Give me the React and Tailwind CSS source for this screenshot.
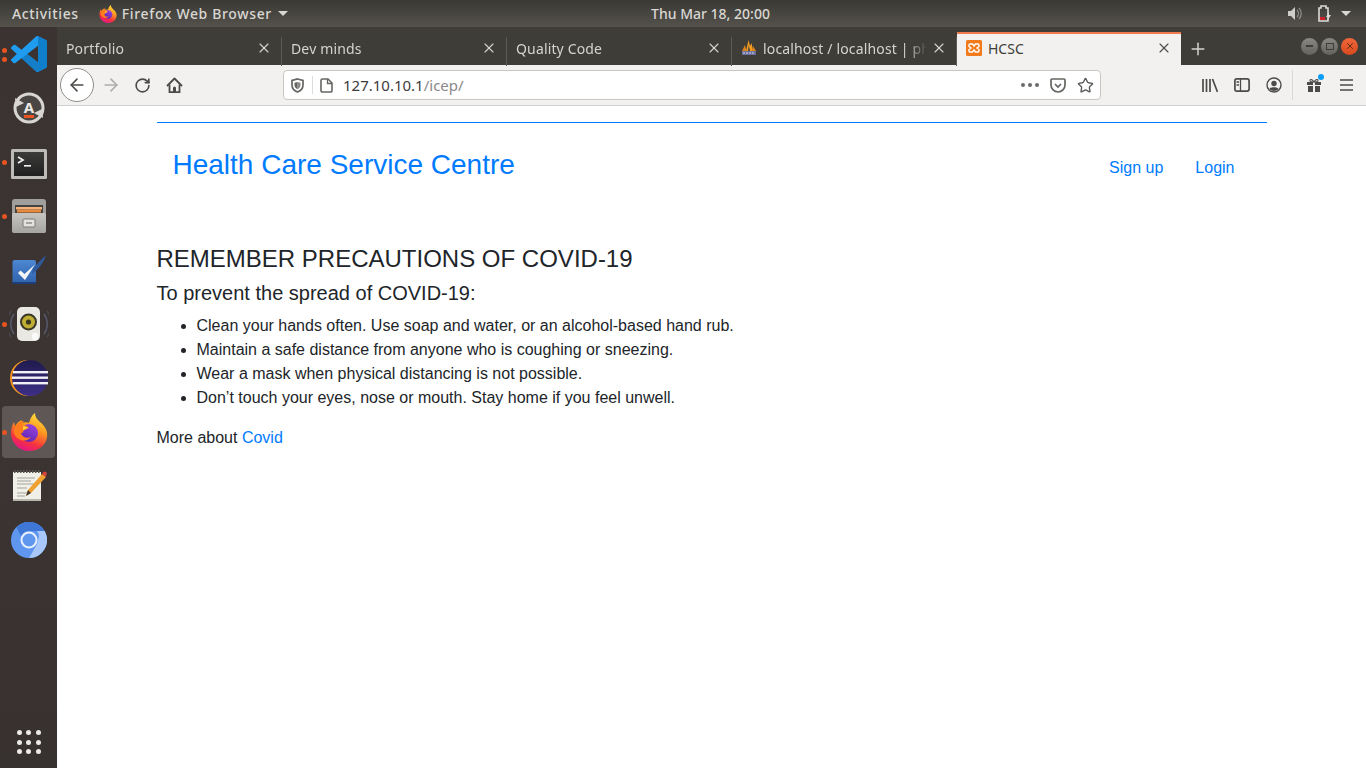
import { X, Plus, ArrowLeft, ArrowRight, RotateCw, Star } from 'lucide-react';

const uiFont = "font-['Noto_Sans',sans-serif]";
const pageFont = "font-['Liberation_Sans',Arial,sans-serif]";

const tabs = [
  { label: 'Portfolio' },
  { label: 'Dev minds' },
  { label: 'Quality Code' },
  { label: 'localhost / localhost | php', icon: 'pma' },
];

const precautions = [
  'Clean your hands often. Use soap and water, or an alcohol-based hand rub.',
  'Maintain a safe distance from anyone who is coughing or sneezing.',
  'Wear a mask when physical distancing is not possible.',
  'Don’t touch your eyes, nose or mouth. Stay home if you feel unwell.',
];

function FirefoxIcon({ size = 38, id = 'ff' }) {
  return (
    <svg width={size} height={size} viewBox="0 0 38 38">
      <defs>
        <linearGradient id={id} x1="0.75" y1="0" x2="0.35" y2="1">
          <stop offset="0" stopColor="#ffe13f" />
          <stop offset="0.4" stopColor="#ff9a1f" />
          <stop offset="0.75" stopColor="#f5323f" />
          <stop offset="1" stopColor="#e31587" />
        </linearGradient>
        <linearGradient id={`${id}-in`} x1="0.8" y1="0" x2="0.2" y2="1">
          <stop offset="0" stopColor="#9a45e0" />
          <stop offset="1" stopColor="#5a22b0" />
        </linearGradient>
      </defs>
      <path d="M25 0c0 4 2 6 5 9 5 4 8 9 7 15-1 8-8 14-18 14C9 38 1 30 1 20c0-4 1-8 3-11l1 4c2-3 4-5 7-6l-1 4c3-2 6-2 8-1 1-4 3-8 6-10z" fill={`url(#${id})`} />
      <circle cx="19" cy="20" r="9" fill={`url(#${id}-in)`} />
      <path d="M4 16c2-5 6-8 10-8l-2 4c3 0 6 1 7 3-3 1-4 2-6 3 1 1 0 2-2 2 1 4 6 6 10 4-2 3-7 5-12 2-4-2-6-6-5-10z" fill="#ff7d1c" />
      <path d="M13 13c2 0 4 1 5 2-2 1-3 1-5 2z" fill="#ffd23c" />
    </svg>
  );
}

function VsCodeIcon() {
  return (
    <svg width="36" height="36" viewBox="0 0 100 100">
      <path fillRule="evenodd" d="M70.9 99.3a6.2 6.2 0 0 0 4.96-.19l20.59-9.91A6.25 6.25 0 0 0 100 83.56V16.44a6.25 6.25 0 0 0-3.54-5.63L75.87.9a6.23 6.23 0 0 0-7.1 1.21L29.35 38.04 12.18 25a4.16 4.16 0 0 0-5.32.24L1.36 30.25a4.17 4.17 0 0 0 0 6.16L16.25 50 1.36 63.59a4.17 4.17 0 0 0 0 6.16l5.5 5a4.16 4.16 0 0 0 5.32.24l17.17-13.03 39.42 35.93a6.22 6.22 0 0 0 2.13 1.41zM75 27.3 45.1 50 75 72.7V27.3z" fill="#1f9cf0" />
      <path d="M75 0.700l21.460 10.110A6.25 6.25 0 0 1 100 16.440v67.120a6.25 6.25 0 0 1-3.550 5.640L75 99.400z" fill="#0f7fcc" />
      <path d="M12.180 75l17.170-13.030L68.770 97.900a6.220 6.220 0 0 0 2.130 1.400L75 99.400V72.700L45.100 50z" fill="#0b67a8" opacity="0.55" />
    </svg>
  );
}

function UpdaterIcon() {
  return (
    <svg width="36" height="36" viewBox="0 0 36 36">
      <circle cx="18" cy="18" r="14" fill="#4a4644" stroke="#d8d6d2" strokeWidth="3" />
      <path d="M4 8l1 9 8-4z" fill="#d8d6d2" />
      <path d="M32 28l-1-9-8 4z" fill="#d8d6d2" />
      <text x="18" y="23" textAnchor="middle" fontSize="15" fontWeight="700" fontFamily="Noto Sans, sans-serif" fill="#ece9e5">A</text>
      <rect x="13" y="25" width="10" height="3" fill="#e95420" />
    </svg>
  );
}

function TerminalIcon() {
  return (
    <svg width="36" height="30" viewBox="0 0 36 30" className="translate-y-[2px]">
      <defs>
        <linearGradient id="term-body" x1="0" y1="0" x2="0" y2="1">
          <stop offset="0" stopColor="#3c3c3b" />
          <stop offset="1" stopColor="#1f1f1f" />
        </linearGradient>
      </defs>
      <rect width="36" height="30" rx="1.500" fill="#bdbcb8" />
      <rect x="3" y="3" width="30" height="24" fill="url(#term-body)" />
      <path d="M7 8l5 3-5 3" fill="none" stroke="#f2f2f2" strokeWidth="1.700" />
      <rect x="13" y="16" width="7" height="1.600" fill="#f2f2f2" />
    </svg>
  );
}

function FilesIcon() {
  return (
    <svg width="34" height="36" viewBox="0 0 34 36">
      <defs>
        <linearGradient id="files-front" x1="0" y1="0" x2="0" y2="1">
          <stop offset="0" stopColor="#c6c5c2" />
          <stop offset="1" stopColor="#a5a4a1" />
        </linearGradient>
      </defs>
      <rect x="0" y="1" width="34" height="34" rx="3" fill="#a09f9c" />
      <rect x="3" y="7" width="28" height="11" fill="#45433f" />
      <rect x="4" y="9" width="26" height="2.500" fill="#f3b27c" />
      <rect x="5" y="11.500" width="24" height="3" fill="#e68a3f" />
      <rect x="0" y="15" width="34" height="20" rx="2" fill="url(#files-front)" />
      <rect x="11" y="21" width="12" height="8" rx="1" fill="#e3e2df" stroke="#7c7b78" />
      <rect x="14" y="24" width="6" height="2" fill="#a4a3a0" />
    </svg>
  );
}

function TodoIcon() {
  return (
    <svg width="36" height="36" viewBox="0 0 36 36">
      <defs>
        <linearGradient id="todo-box" x1="0" y1="0" x2="0" y2="1">
          <stop offset="0" stopColor="#4d86d2" />
          <stop offset="1" stopColor="#2f62ac" />
        </linearGradient>
      </defs>
      <rect x="1.500" y="8" width="23.500" height="24" rx="2" fill="url(#todo-box)" />
      <rect x="1.500" y="30" width="23.500" height="2" fill="#1d3f78" />
      <path d="M22 16L35 3c-2 7-7 14-14 19z" fill="#2f5b9e" />
      <path d="M7 21l2.500-2.500L13.500 22 24 12.500 14 28z" fill="#f4f6f8" />
    </svg>
  );
}

function SpeakerIcon() {
  return (
    <svg width="40" height="36" viewBox="0 0 40 36">
      <path d="M5 8a17 17 0 000 20M35 8a17 17 0 010 20" fill="none" stroke="#56576a" strokeWidth="1.500" />
      <path d="M2 5a22 22 0 000 26M38 5a22 22 0 010 26" fill="none" stroke="#4a4850" strokeWidth="1.500" />
      <rect x="8" y="1" width="23" height="34" rx="5" fill="#e9e8e2" />
      <circle cx="19.500" cy="16" r="8.500" fill="#3a3826" />
      <circle cx="19.500" cy="16" r="6.500" fill="#bfae33" />
      <circle cx="19.500" cy="16" r="2.600" fill="#39361f" />
      <rect x="23" y="27" width="6" height="7" rx="2" fill="#fbfbfb" />
    </svg>
  );
}

function EclipseIcon() {
  return (
    <svg width="38" height="38" viewBox="0 0 38 38">
      <defs>
        <linearGradient id="eclipse-disc" x1="0" y1="0" x2="0" y2="1">
          <stop offset="0" stopColor="#1f1b4d" />
          <stop offset="1" stopColor="#3d2f86" />
        </linearGradient>
      </defs>
      <circle cx="18" cy="19" r="18" fill="#f7941e" />
      <circle cx="20" cy="19" r="18" fill="url(#eclipse-disc)" />
      <rect x="3" y="12" width="35" height="2.400" fill="#f1f0f6" />
      <rect x="2" y="17.500" width="36" height="2.400" fill="#f1f0f6" />
      <rect x="3" y="23" width="35" height="2.400" fill="#f1f0f6" />
    </svg>
  );
}

function GeditIcon() {
  return (
    <svg width="36" height="36" viewBox="0 0 36 36">
      <rect x="2" y="4" width="28" height="29" fill="#f1f0e8" />
      <rect x="2" y="31" width="28" height="2" fill="#b9b8ae" />
      <path d="M3 3.500h26" stroke="#55544f" strokeWidth="3" strokeDasharray="1.500 1.500" />
      <path d="M6 10h18M6 13h14M6 16h17M6 20h10M6 25h12M6 28h8" stroke="#a3a29b" strokeWidth="1" />
      <path d="M15 28l2-6L31 6l4 3-15 16z" fill="#f0a030" />
      <path d="M15 28l2-6 3 3z" fill="#3d3a33" />
      <path d="M31 6l1.500-2a2 2 0 013 2.500L35 9z" fill="#d9453c" />
    </svg>
  );
}

function ChromiumIcon() {
  return (
    <svg width="36" height="36" viewBox="0 0 36 36">
      <circle cx="18" cy="18" r="18" fill="#5f97ee" />
      <path d="M18 0a18 18 0 0115.600 9H18a9 9 0 00-8 5L5.300 5.300A18 18 0 0118 0z" fill="#3f77d6" />
      <path d="M33.600 9A18 18 0 0118 36l7.800-13.500A9 9 0 0027 18a9 9 0 00-1-9z" fill="#a8c7fa" />
      <circle cx="18" cy="18" r="7.500" fill="#5f97ee" stroke="#e8f0fe" strokeWidth="2" />
    </svg>
  );
}

function XamppIcon() {
  return (
    <svg width="16" height="16" viewBox="0 0 16 16">
      <rect width="16" height="16" rx="1.500" fill="#f27a1a" />
      <path d="M4 4h2.500L8 6l1.500-2H12a1 1 0 011 1v1.500L11 8l2 1.500V11a1 1 0 01-1 1H9.500L8 10l-1.500 2H4a1 1 0 01-1-1V9.500L5 8 3 6.500V5a1 1 0 011-1z" fill="none" stroke="#fff" strokeWidth="1.400" />
    </svg>
  );
}

function PmaIcon() {
  return (
    <svg width="16" height="16" viewBox="0 0 16 16">
      <path d="M5 11L7.500 0l1.500 6 1.500-3 1.500 8z" fill="#f29d1e" />
      <path d="M1 11l3-6 1.500 6zM11 11l1-5 3 5z" fill="#e0841a" />
      <path d="M7 11l.800-6 1.200 6z" fill="#3f3d38" />
      <rect x="1" y="11" width="14" height="4" fill="#6a6f9e" />
      <path d="M2 13h12" stroke="#d8d9e8" strokeWidth="1" strokeDasharray="2 1" />
    </svg>
  );
}

function Tab({ label, icon }) {
  return (
    <div className="relative flex h-full w-[225px] items-center pb-px pl-[9px] pr-[10px] text-[14px] tracking-[0.15px] text-[#d6d4cf]">
      {icon === 'pma' && <span className="mr-[6px] shrink-0"><PmaIcon /></span>}
      <span className="min-w-0 flex-1 overflow-hidden whitespace-nowrap [mask-image:linear-gradient(to_right,#000_88%,transparent)]">{label}</span>
      <X size={16} strokeWidth={1.7} className="ml-1 shrink-0 text-[#d6d4cf]" />
      <span className="absolute right-0 top-[5px] h-[29px] w-px bg-[#5c5a55]" />
    </div>
  );
}

function TopBar() {
  return (
    <div className={`flex h-[27px] shrink-0 items-center justify-between bg-gradient-to-b from-[#3a3935] to-[#55524c] pl-3 pr-[15px] text-[14px] font-medium text-[#d9d7d2] ${uiFont}`}>
      <div className="flex flex-1 items-center tracking-[0.65px]">
        <span>Activities</span>
        <span className="ml-5 flex items-center gap-[5px]">
          <FirefoxIcon size={18} id="ff-top" />
          Firefox Web Browser
          <svg width="10" height="5" viewBox="0 0 10 5" className="ml-[1px]"><path d="M0 0h10L5 5z" fill="#d9d7d2" /></svg>
        </span>
      </div>
      <span className="pl-[58px] text-center">Thu Mar 18, 20:00</span>
      <div className="flex flex-1 items-center justify-end">
        <svg width="15" height="15" viewBox="0 0 15 15">
          <path d="M1 5h3l4-4v13l-4-4H1z" fill="#cfcdc8" />
          <path d="M10 4a5 5 0 010 7M12 2a8 8 0 010 11" fill="none" stroke="#8f8d88" strokeWidth="1.300" />
        </svg>
        <svg width="14" height="18" viewBox="0 0 14 18" className="ml-[16px]">
          <path d="M3 1h5v2h2v13H1V3h2z" fill="none" stroke="#dddbd6" strokeWidth="1.600" />
          <rect x="2" y="12" width="5" height="3" fill="#d0202a" />
          <path d="M11 7l-3 5h2l-1 4 4-6h-2z" fill="#dddbd6" />
        </svg>
        <svg width="10" height="5" viewBox="0 0 10 5" className="ml-[9px]"><path d="M0 0h10L5 5z" fill="#d9d7d2" /></svg>
      </div>
    </div>
  );
}

function Dock() {
  const items = [
    { icon: <VsCodeIcon />, dots: 2 },
    { icon: <UpdaterIcon /> },
    { icon: <TerminalIcon />, dots: 1 },
    { icon: <FilesIcon />, dots: 1 },
    { icon: <TodoIcon /> },
    { icon: <SpeakerIcon />, dots: 1 },
    { icon: <EclipseIcon /> },
    { icon: <FirefoxIcon id="ff-dock" />, dots: 1, active: true },
    { icon: <GeditIcon /> },
    { icon: <ChromiumIcon /> },
  ];
  return (
    <aside className="flex w-[57px] shrink-0 flex-col bg-gradient-to-b from-[#3a3331] via-[#3b3432] to-[#37312f] pb-[14px]">
      {items.map((item, i) => (
        <div key={i} className="relative flex h-[54px] items-center justify-center">
          {item.active && <span className="absolute inset-x-[2px] inset-y-px rounded-[4px] bg-[#5f5755]" />}
          <span className="relative flex">{item.icon}</span>
          {item.dots === 1 && <span className="absolute left-[2px] top-[25px] h-[5px] w-[5px] rounded-full bg-[#e95420]" />}
          {item.dots === 2 && (
            <span className="absolute left-[2px] top-[21px] flex flex-col gap-[4px]">
              <span className="h-[5px] w-[5px] rounded-full bg-[#e95420]" />
              <span className="h-[5px] w-[5px] rounded-full bg-[#e95420]" />
            </span>
          )}
        </div>
      ))}
      <div className="mt-auto grid w-fit grid-cols-3 gap-[4.5px] self-center">
        {Array.from({ length: 9 }).map((_, i) => (
          <span key={i} className="h-[5px] w-[5px] rounded-full bg-[#ecebe8]" />
        ))}
      </div>
    </aside>
  );
}

function TabBar() {
  return (
    <div className={`flex h-[38px] shrink-0 items-end bg-[#3f3d38] ${uiFont}`}>
      <div className="flex h-[33px] items-center self-end">
        {tabs.map((t) => <Tab key={t.label} {...t} />)}
        <div className="flex h-full w-[224px] items-center border-t-2 border-[#ef7a4f] bg-[#f2f1f0] pb-[3px] pl-[9px] pr-[9px] text-[14px] text-[#3d3c38]">
          <XamppIcon />
          <span className="ml-[6px] flex-1">HCSC</span>
          <X size={16} strokeWidth={1.7} className="text-[#4c4b47]" />
        </div>
        <Plus size={20} strokeWidth={1.8} className="ml-[7px] text-[#d6d4cf]" />
      </div>
      <div className="ml-auto mr-[8px] flex items-center gap-[3px] self-center">
        <span className="flex h-[17px] w-[17px] items-center justify-center rounded-full bg-gradient-to-b from-[#8a8883] to-[#65635e]"><span className="h-[2px] w-[7px] bg-[#3f3d38]" /></span>
        <span className="flex h-[17px] w-[17px] items-center justify-center rounded-full bg-gradient-to-b from-[#8a8883] to-[#65635e]"><span className="h-[7px] w-[8px] border border-[#3f3d38]" /></span>
        <span className="flex h-[17px] w-[17px] items-center justify-center rounded-full bg-gradient-to-b from-[#f0663a] to-[#d84a1c]"><X size={10} strokeWidth={2} className="text-[#4a2415]" /></span>
      </div>
    </div>
  );
}

function Toolbar() {
  return (
    <div className={`flex h-[41px] shrink-0 items-center border-b border-[#d3d1cd] bg-[#f2f1f0] ${uiFont}`}>
      <span className="ml-[3px] flex h-[34px] w-[34px] items-center justify-center rounded-full border border-[#8f8e8b] bg-white">
        <ArrowLeft size={20} strokeWidth={1.9} className="text-[#4c4b49]" />
      </span>
      <ArrowRight size={20} strokeWidth={1.9} className="ml-[7px] text-[#adacaa]" />
      <RotateCw size={17} strokeWidth={2.3} className="ml-[13px] text-[#4c4b49]" />
      <svg width="17" height="17" viewBox="0 0 17 17" className="ml-[15px]">
        <path d="M1.500 8.500L8.500 1.500l7 7" fill="none" stroke="#4c4b49" strokeWidth="1.800" strokeLinejoin="round" strokeLinecap="round" />
        <path d="M3.500 7.500V15.200h10V7.500" fill="none" stroke="#4c4b49" strokeWidth="1.800" />
        <path d="M7 15v-4a1.500 1.500 0 013 0v4z" fill="#4c4b49" />
      </svg>

      <div className="ml-[100px] flex h-[30px] w-[818px] items-center rounded-[4px] border border-[#c8c6c2] bg-white pl-[7px] pr-[6px]">
        <svg width="13" height="15" viewBox="0 0 13 15">
          <path d="M6.500 1L12 2.500V7c0 3.500-2.500 5.800-5.500 7C3.500 12.800 1 10.500 1 7V2.500z" fill="none" stroke="#666562" strokeWidth="1.700" />
          <path d="M6.500 4L9.500 4.800V7c0 2-1.300 3.400-3 4.200z" fill="#8a8987" />
          <path d="M6.500 4L3.500 4.800V7c0 2 1.300 3.400 3 4.200z" fill="#66655f" />
        </svg>
        <span className="ml-[8px] mr-[7px] h-[18px] w-px bg-[#dddcd9]" />
        <svg width="13" height="15" viewBox="0 0 13 15">
          <path d="M2.500 1H8l4 4v7.500a1.500 1.500 0 01-1.500 1.500h-8A1.500 1.500 0 011 12.500v-10A1.500 1.500 0 012.500 1z" fill="none" stroke="#666562" strokeWidth="1.600" />
          <path d="M7.500 1v4.500H12" fill="none" stroke="#666562" strokeWidth="1.300" />
        </svg>
        <span className="ml-[10px] flex-1 text-[15px] text-[#3d3c3a]">
          127.10.10.1<span className="text-[#8a8987]">/icep/</span>
        </span>
        <span className="flex gap-[3px]">
          <span className="h-[4px] w-[4px] rounded-full bg-[#6b6a67]" />
          <span className="h-[4px] w-[4px] rounded-full bg-[#6b6a67]" />
          <span className="h-[4px] w-[4px] rounded-full bg-[#6b6a67]" />
        </span>
        <svg width="16" height="15" viewBox="0 0 16 15" className="ml-[11px]">
          <path d="M2 1h12a1 1 0 011 1v5a7 7 0 01-14 0V2a1 1 0 011-1z" fill="none" stroke="#666562" strokeWidth="1.700" />
          <path d="M5 6l3 3 3-3" fill="none" stroke="#666562" strokeWidth="1.700" />
        </svg>
        <Star size={17} strokeWidth={1.9} className="ml-[11px] text-[#5a5957]" />
      </div>

      <div className="ml-auto flex items-center text-[#4c4b49]">
        <svg width="16" height="15" viewBox="0 0 16 15">
          <path d="M1 1v13M4.500 1v13M8 1v13M10.500 1l5 13" fill="none" stroke="#4c4b49" strokeWidth="1.700" />
        </svg>
        <svg width="16" height="14" viewBox="0 0 16 14" className="ml-[16px]">
          <rect x="0.900" y="0.900" width="14.200" height="12.200" rx="2" fill="none" stroke="#4c4b49" strokeWidth="1.700" />
          <path d="M6.500 1v12M2.500 4h2.500M2.500 7h2.500" stroke="#4c4b49" strokeWidth="1.300" />
        </svg>
        <svg width="16" height="16" viewBox="0 0 16 16" className="ml-[16px]">
          <circle cx="8" cy="8" r="7" fill="none" stroke="#4c4b49" strokeWidth="1.400" />
          <circle cx="8" cy="6.500" r="2.700" fill="#4c4b49" />
          <path d="M3.500 12c1-2.500 8-2.500 9 0-2 2.500-7 2.500-9 0z" fill="#4c4b49" />
        </svg>
        <span className="ml-[10px] h-[30px] w-px bg-[#d9d8d5]" />
        <span className="relative ml-[14px] flex">
          <svg width="14" height="14" viewBox="0 0 14 14">
            <path d="M0 4h6v3H0zM8 4h6v3H8zM1 8h5v6H1zM8 8h5v6H8z" fill="#4c4b49" />
            <path d="M7 4C5 1 3 1 3 2.500S5 4 7 4c2 0 4 0 4-1.500S9 1 7 4z" fill="none" stroke="#4c4b49" strokeWidth="1.100" />
          </svg>
          <span className="absolute -right-[3px] -top-[4px] h-[6px] w-[6px] rounded-full bg-[#0a9dfb]" />
        </span>
        <svg width="13" height="12" viewBox="0 0 13 12" className="ml-[19px] mr-[13px]">
          <path d="M0 1h13M0 6h13M0 11h13" stroke="#4c4b49" strokeWidth="1.700" />
        </svg>
      </div>
    </div>
  );
}

function Page() {
  return (
    <main className={`flex-1 bg-white pl-[99.5px] pr-[99.5px] pt-4 text-[16px] leading-6 text-[#212529] ${pageFont}`}>
      <header className="flex items-start justify-between border-t border-[#007bff] px-4 pt-[21px]">
        <h1 className="text-[28px] font-normal leading-[42px] text-[#007bff]">Health Care Service Centre</h1>
        <nav className="mt-3 flex gap-8 pr-4 text-[#007bff]">
          <a>Sign up</a>
          <a>Login</a>
        </nav>
      </header>
      <section className="mt-[58px]">
        <h2 className="text-[24px] font-normal leading-[29px]">REMEMBER PRECAUTIONS OF COVID-19</h2>
        <h3 className="mt-2 text-[20px] font-normal leading-6">To prevent the spread of COVID-19:</h3>
        <ul className="mt-[9px] list-disc pl-10">
          {precautions.map((p) => <li key={p}>{p}</li>)}
        </ul>
        <p className="mt-4">More about <a className="text-[#007bff]">Covid</a></p>
      </section>
    </main>
  );
}

export default function App() {
  return (
    <div className="flex h-[768px] w-[1366px] flex-col overflow-hidden">
      <TopBar />
      <div className="flex min-h-0 flex-1">
        <Dock />
        <div className="flex min-w-0 flex-1 flex-col">
          <TabBar />
          <Toolbar />
          <Page />
        </div>
      </div>
    </div>
  );
}
